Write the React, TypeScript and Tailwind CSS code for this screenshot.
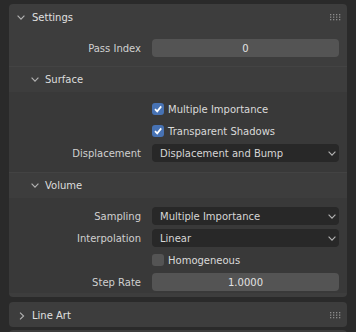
import React from 'react'

const font = { fontFamily: '"DejaVu Sans", "Liberation Sans", sans-serif' }

function Down({ className = '' }: { className?: string }) {
  return (
    <svg width="8" height="5" viewBox="0 0 8 5" className={className}>
      <path d="M0.6 0.6 L4 4.2 L7.4 0.6" fill="none" stroke="#b4b4b4" strokeWidth="1.1" />
    </svg>
  )
}

function Right() {
  return (
    <svg width="6" height="8" viewBox="0 0 6 8">
      <path d="M1 0.6 L4.6 4 L1 7.4" fill="none" stroke="#b4b4b4" strokeWidth="1.1" />
    </svg>
  )
}

function Grip() {
  const dots = []
  for (let r = 0; r < 3; r++)
    for (let c = 0; c < 4; c++) dots.push(<rect key={r + '-' + c} x={c * 3} y={r * 2.5} width="1.3" height="1.3" fill="#8c8c8c" />)
  return (
    <svg width="12" height="7" viewBox="0 0 12 7">
      {dots}
    </svg>
  )
}

function Check({ on }: { on: boolean }) {
  return (
    <div className={'flex h-[12px] w-[12px] items-center justify-center rounded-[3px] ' + (on ? 'bg-[#4772b3]' : 'bg-[#545454]')}>
      {on && (
        <svg width="10" height="10" viewBox="0 0 10 10">
          <path d="M2 5.2 L4.2 7.4 L8.2 2.4" fill="none" stroke="#ffffff" strokeWidth="1.7" />
        </svg>
      )}
    </div>
  )
}

function Row({ label, children }: { label?: string; children: React.ReactNode }) {
  return (
    <div className="flex h-[22px] items-center">
      <div className="w-[143px] pr-[11px] text-right text-[#d0d0d0]">{label}</div>
      <div className="w-[187px]">{children}</div>
    </div>
  )
}

function NumField({ value }: { value: string }) {
  return (
    <div className="flex h-[18px] items-center justify-center rounded-[4px] bg-[#545454] text-[#e2e2e2]">{value}</div>
  )
}

function Select({ value }: { value: string }) {
  return (
    <div className="flex h-[18px] items-center justify-between rounded-[4px] bg-[#282828] pl-[8px] pr-[3px] text-[#d6d6d6]">
      <span>{value}</span>
      <Down />
    </div>
  )
}

function CheckRow({ label, on }: { label: string; on: boolean }) {
  return (
    <Row>
      <div className="flex items-center gap-[4px] text-[#dadada]">
        <Check on={on} />
        <span>{label}</span>
      </div>
    </Row>
  )
}

function SubHeader({ title, mt }: { title: string; mt: string }) {
  return (
    <div className={'flex h-[26px] items-center border-t border-[#434343] bg-[#3d3d3d] pl-[22px] ' + mt}>
      <Down />
      <span className="ml-[6px] text-[#dcdcdc]">{title}</span>
    </div>
  )
}

export default function App() {
  return (
    <div className="h-[332px] w-[356px] overflow-hidden bg-[#2a2a2a] px-[9px] pt-[4px] text-[10px]" style={font}>
      <div className="overflow-hidden rounded-[4px] bg-[#3d3d3d] pb-[4px]">
        <div className="flex h-[27px] items-center pl-[8px] pr-[5px]">
          <Down />
          <span className="ml-[7px] flex-1 text-[#e0e0e0]">Settings</span>
          <Grip />
        </div>
        <div className="pt-[6px]">
          <Row label="Pass Index">
            <NumField value="0" />
          </Row>
        </div>
        <SubHeader title="Surface" mt="mt-[7px]" />
        <div className="bg-[#393939] pt-[6px]">
          <CheckRow label="Multiple Importance" on />
          <CheckRow label="Transparent Shadows" on />
          <Row label="Displacement">
            <Select value="Displacement and Bump" />
          </Row>
          <div className="h-[8px]" />
        </div>
        <SubHeader title="Volume" mt="" />
        <div className="bg-[#393939] pt-[7px]">
          <Row label="Sampling">
            <Select value="Multiple Importance" />
          </Row>
          <Row label="Interpolation">
            <Select value="Linear" />
          </Row>
          <CheckRow label="Homogeneous" on={false} />
          <Row label="Step Rate">
            <NumField value="1.0000" />
          </Row>
        </div>
      </div>
      <div className="mt-[5px] flex h-[25px] items-center rounded-[4px] bg-[#3d3d3d] pl-[10px] pr-[5px] pt-[2px]">
        <Right />
        <span className="ml-[7px] flex-1 text-[#e0e0e0]">Line Art</span>
        <Grip />
      </div>
      <div className="mt-[3px] h-[20px] rounded-[4px] bg-[#3d3d3d]" />
    </div>
  )
}
